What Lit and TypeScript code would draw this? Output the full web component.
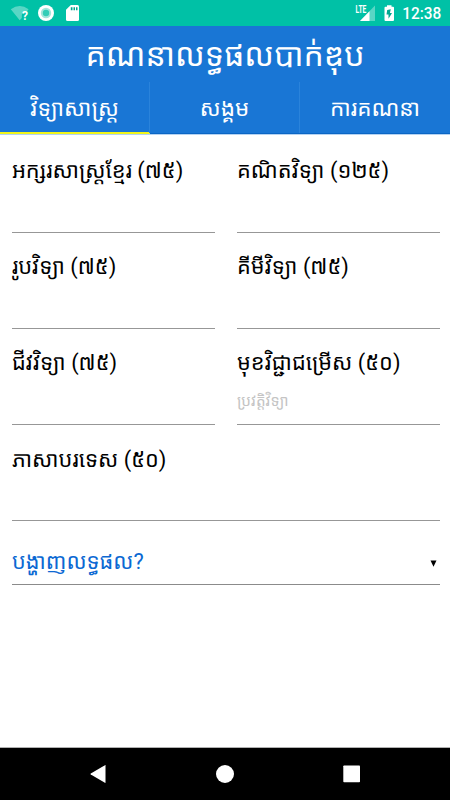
import { LitElement, html, css } from "lit";
import { customElement, property } from "lit/decorators.js";
import { classMap } from "lit/directives/class-map.js";

@customElement("status-bar")
class StatusBar extends LitElement {
  static styles = css`
    :host { display: flex; height: 26px; background: #00c1a6; flex: none; }
    svg { display: block; width: 450px; height: 26px; }
    .time { font: 500 16px Roboto, sans-serif; }
    .lte { font: 700 10.3px Roboto, sans-serif; }
    .q { font: 700 12.5px Roboto, sans-serif; }
  `;
  render() {
    return html`<svg viewBox="0 0 450 26" fill="#fff">
      <path d="M10.8 9.2Q19.8 2.6 28.6 9.2L27.2 11Q22 10.6 21.8 15.5V18L19.7 20.3Z" opacity=".35" />
      <text class="q" x="22" y="19.6" textLength="6" lengthAdjust="spacingAndGlyphs">?</text>
      <circle cx="46" cy="13" r="8" />
      <circle cx="46" cy="13" r="5.2" fill="#a3e5db" />
      <circle cx="46" cy="13" r="3.2" fill="#33cdb7" />
      <path d="M70.8 5H77.5Q79 5 79 6.5V19.5Q79 21 77.5 21H67.5Q66 21 66 19.5V9.8Z" />
      <path d="M70.8 7.2h1.7v3h-1.7zM73.5 7.2h1.5v3h-1.5zM76 7.2h1.5v3h-1.5z" fill="#00a890" />
      <text class="lte" x="355.6" y="12.8" textLength="10.8" lengthAdjust="spacingAndGlyphs">LTE</text>
      <path d="M375 5.5V21H360Z" opacity=".35" />
      <path d="M369.5 11.2V21H360Z" />
      <path d="M387 5.2h4.5v1.6h1.5q1 0 1 1V20q0 1-1 1h-7.5q-1 0-1-1V7.8q0-1 1-1h1.5z" />
      <path d="M390.8 9.2L387.200 10L386.500 14.500h2v4.300l3.500-5.800h-2.100z" fill="#00a890" />
      <text class="time" x="402.2" y="19.2" textLength="39" lengthAdjust="spacingAndGlyphs">12:38</text>
    </svg>`;
  }
}

@customElement("score-field")
class ScoreField extends LitElement {
  @property() label = "";
  @property() hint = "";
  static styles = css`
    :host { display: block; height: 96.2px; box-sizing: border-box; }
    .label { height: 30px; line-height: 31px; font-size: 21.8px; color: #000; white-space: nowrap; }
    .input { height: 47.5px; padding-bottom: 1px; box-sizing: border-box; border-bottom: 1px solid #979797; font-size: 15.2px; color: #c4c4c4; display: flex; align-items: center; white-space: nowrap; }
  `;
  render() {
    return html`<div class="label">${this.label}</div><div class="input">${this.hint}</div>`;
  }
}

const TABS = ["វិទ្យាសាស្ត្រ", "សង្គម", "ការគណនា"];
const FIELDS: { label: string; hint?: string; wide?: boolean }[] = [
  { label: "អក្សរសាស្ត្រខ្មែរ (៧៥)" },
  { label: "គណិតវិទ្យា (១២៥)" },
  { label: "រូបវិទ្យា (៧៥)" },
  { label: "គីមីវិទ្យា (៧៥)" },
  { label: "ជីវវិទ្យា (៧៥)" },
  { label: "មុខវិជ្ជាជម្រើស (៥០)", hint: "ប្រវត្តិវិទ្យា" },
  { label: "ភាសាបរទេស (៥០)", wide: true },
];

@customElement("app-root")
class AppRoot extends LitElement {
  static styles = css`
    :host { display: flex; flex-direction: column; height: 800px; width: 450px; background: #fff; overflow: hidden; font-family: Roboto, "Noto Sans Khmer", sans-serif; }
    .head { background: #1976d5; color: #fff; height: 108px; flex: none; display: flex; flex-direction: column; box-sizing: border-box; border-bottom: 1px solid #0b66c4; box-shadow: 0 1px #b5d3f2; }
    .title { height: 56px; line-height: 59px; font-size: 32px; text-align: center; white-space: nowrap; }
    .tabs { display: grid; grid-template-columns: repeat(3, 1fr); flex: 1; }
    .tab { display: flex; align-items: center; justify-content: center; font-size: 22.5px; line-height: 30px; border-right: 1px solid #2a83db; box-sizing: border-box; padding-top: 1px; white-space: nowrap; }
    .tab:last-child { border-right: 0; }
    .on { box-shadow: inset 0 -1px #f2f51a, 0 1px #f2f51a; }
    .form { display: grid; grid-template-columns: 1fr 1fr; column-gap: 22px; padding: 21px 10px 0 12px; }
    .wide { grid-column: 1 / -1; }
    .result { margin: 0 10px 0 12px; height: 45px; box-sizing: border-box; border-bottom: 1px solid #8b8b8b; display: flex; align-items: center; justify-content: space-between; color: #0b69d3; font-size: 21.7px; line-height: 30px; }
    .caret { width: 7px; height: 7px; margin: 3px 3px 0 0; }
    .nav { margin-top: auto; height: 53px; box-sizing: border-box; border-top: 1px solid #b0b0b0; background: #000; flex: none; }
    .nav svg { display: block; }
  `;
  render() {
    return html`
      <status-bar></status-bar>
      <div class="head">
        <div class="title">គណនាលទ្ធផលបាក់ឌុប</div>
        <div class="tabs">
          ${TABS.map((t, i) => html`<div class=${classMap({ tab: true, on: i === 0 })}>${t}</div>`)}
        </div>
      </div>
      <div class="form">
        ${FIELDS.map((f) => html`<score-field class=${classMap({ wide: !!f.wide })} .label=${f.label} .hint=${f.hint ?? ""}></score-field>`)}
      </div>
      <div class="result">
        <span>បង្ហាញលទ្ធផល?</span>
        <svg class="caret" viewBox="0 0 7 7"><path d="M.5 .5h6L3.500 6.700z" /></svg>
      </div>
      <div class="nav">
        <svg width="450" height="52" viewBox="0 0 450 52" fill="#fff">
          <path d="M105.500 17.500v17q0 .6-.6.3L90.800 26.600q-.8-.6 0-1.200L104.900 17.200q.6-.3.600.3z" />
          <circle cx="225" cy="26" r="9" />
          <rect x="343.300" y="17.500" width="16.700" height="16.700" rx=".8" />
        </svg>
      </div>
    `;
  }
}
